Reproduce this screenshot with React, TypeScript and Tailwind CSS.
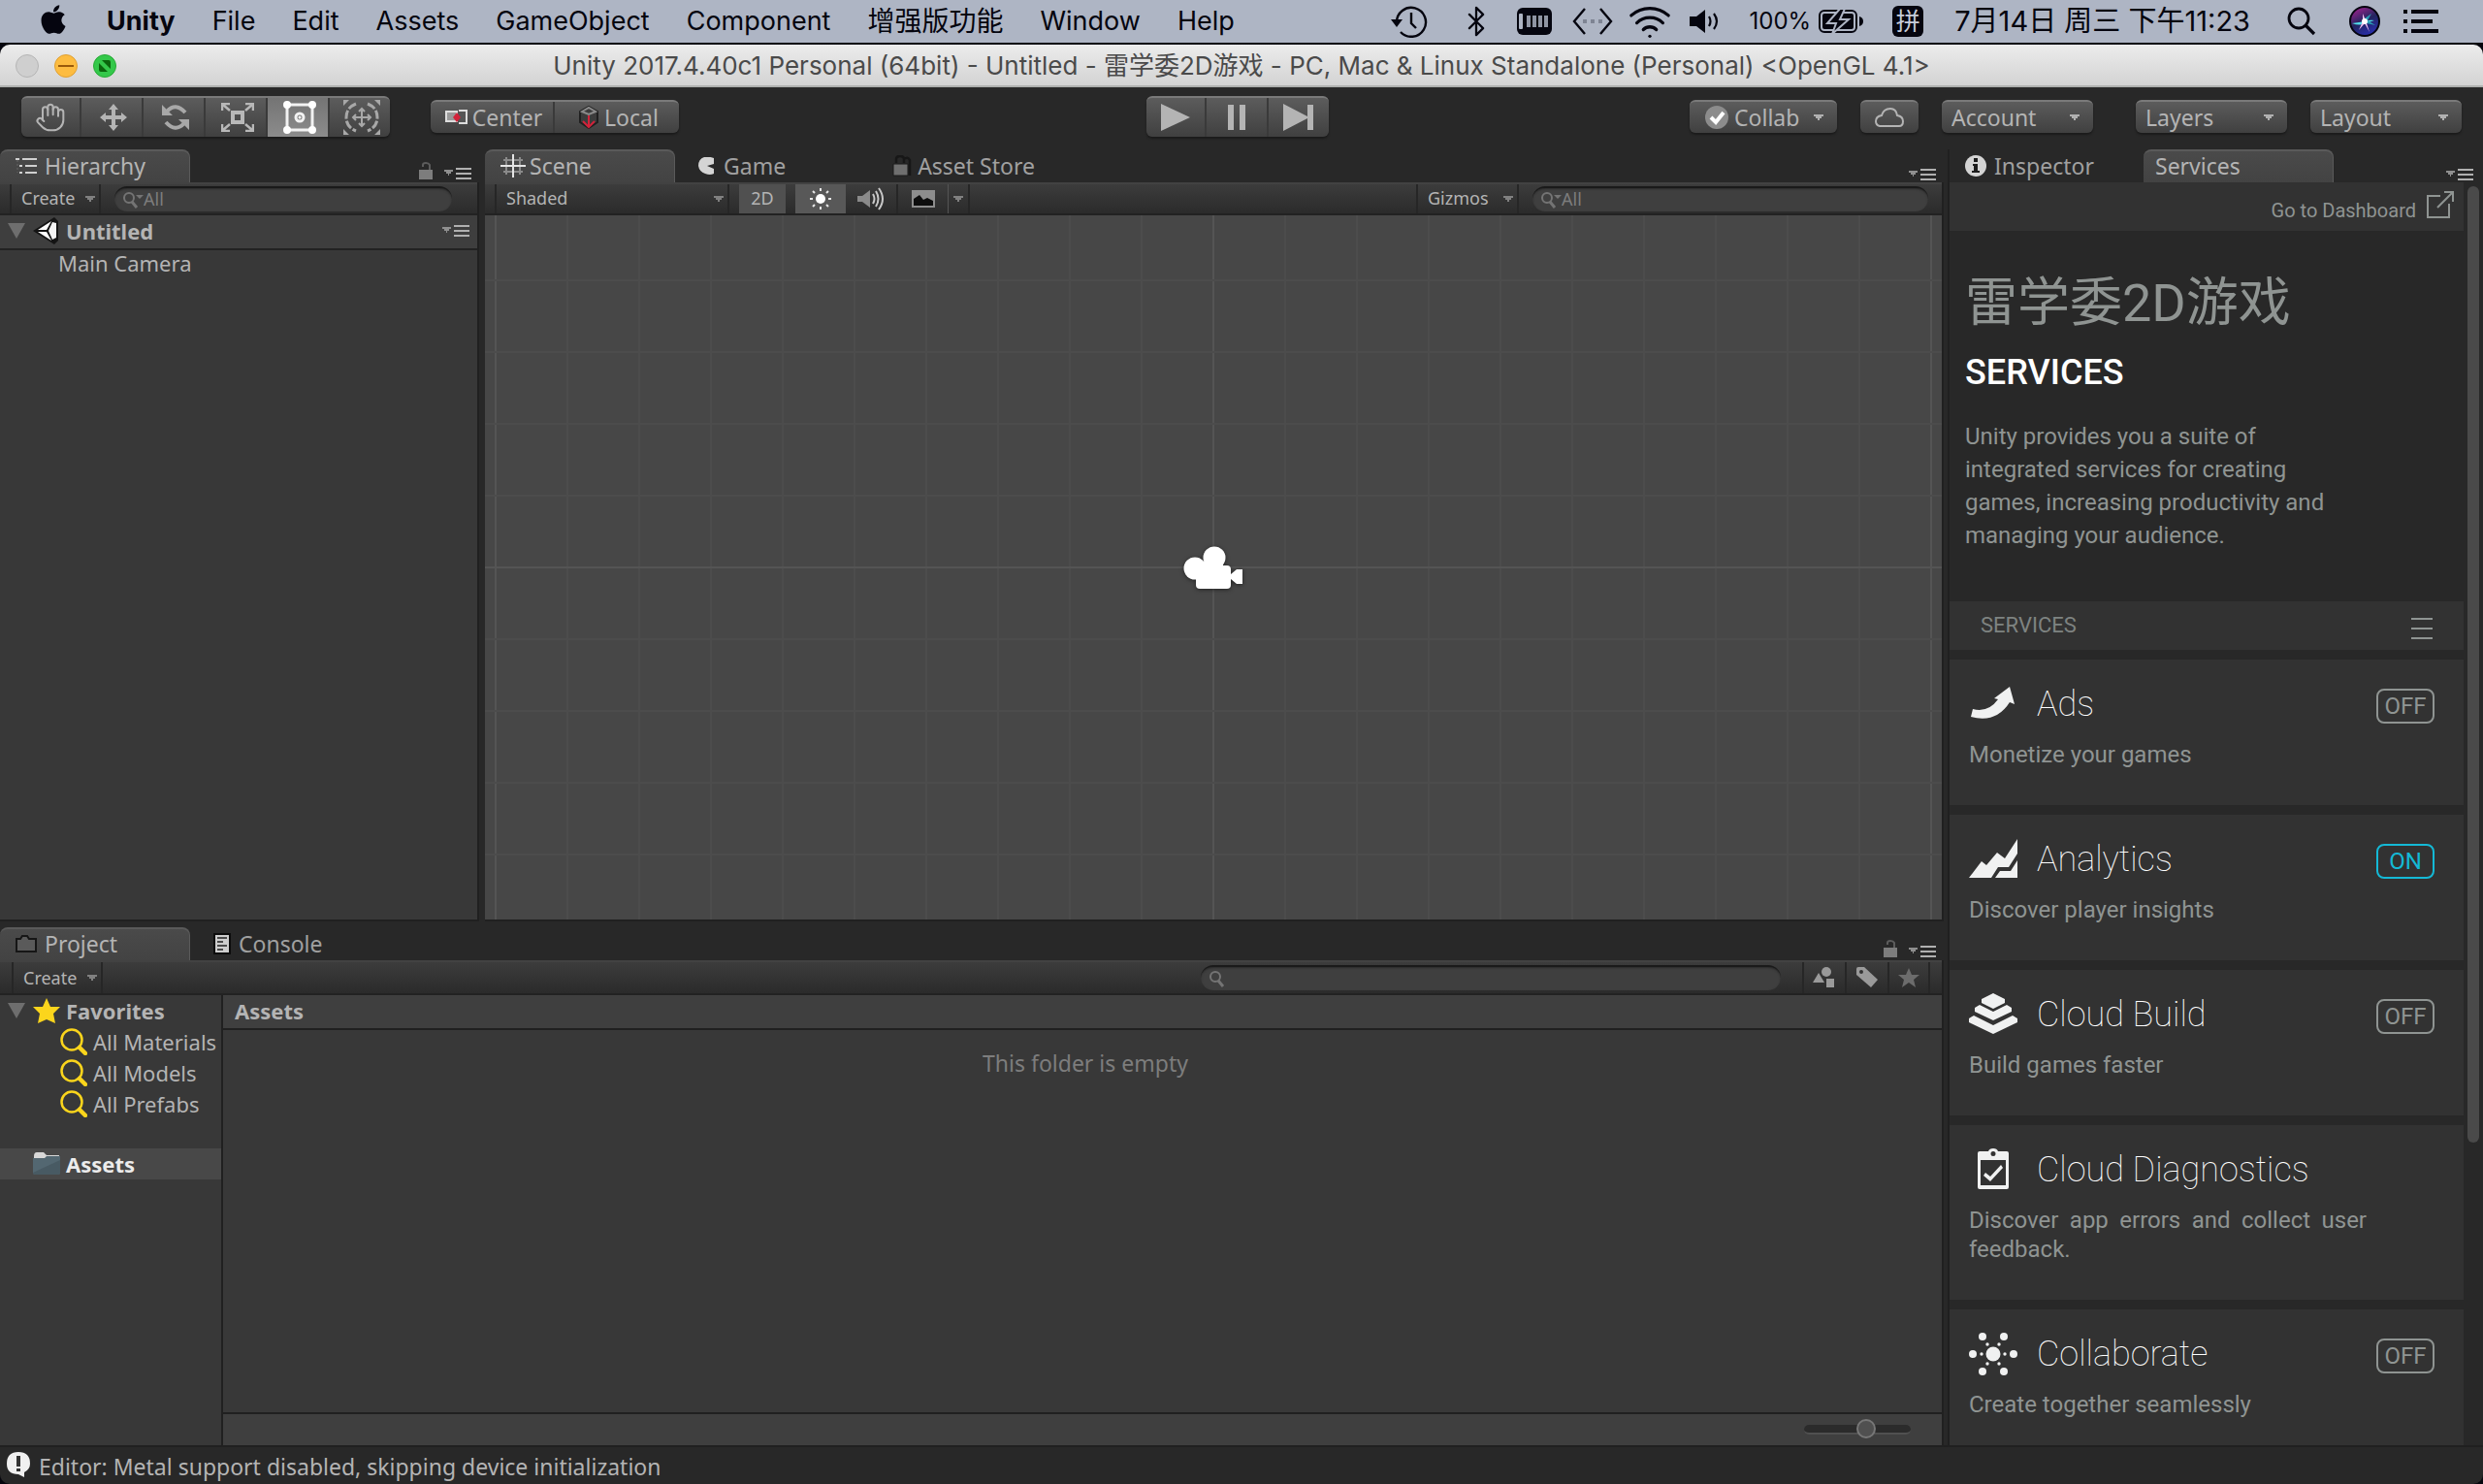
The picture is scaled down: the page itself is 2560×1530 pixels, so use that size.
import React from 'react';
import { Bluetooth, Hand, Wifi } from 'lucide-react';
import { FaApple } from 'react-icons/fa';

const menuItems = ['File', 'Edit', 'Assets', 'GameObject', 'Component', '增强版功能', 'Window', 'Help'];

/* ---------- small shared pieces ---------- */

const Arrow: React.FC<{ className?: string }> = ({ className = '' }) => (
  <svg viewBox="0 0 10 8" className={`h-2 w-2.5 shrink-0 ${className}`} fill="currentColor" aria-hidden="true">
    <path d="M0 1h10v2H8v2H6v2H4V5H2V3H0z" />
  </svg>
);

const PanelMenu: React.FC = () => (
  <button type="button" aria-label="Panel menu" className="block">
    <svg viewBox="0 0 28 12" className="h-3 w-7">
      <path d="M0 2h9v2H7v2H5v2H4V6H2V4H0z" fill="#8f8f8f" />
      <path d="M12 1h16M12 6h16M12 11h16" stroke="#b0b0b0" strokeWidth="2" />
    </svg>
  </button>
);

const Lock: React.FC = () => (
  <button type="button" aria-label="Lock panel" className="block">
    <svg viewBox="0 0 14 18" className="h-[18px] w-3.5">
      <path d="M4 5V3q0-2 3-2t4 2v5" fill="none" stroke="#5c5c5c" strokeWidth="2" />
      <path d="M0 8h14v10H0z" fill="#7d7d7d" />
    </svg>
  </button>
);

interface DropdownProps {
  label: string;
  name?: string;
  selectClass?: string;
  arrowClass?: string;
}

const Dropdown: React.FC<DropdownProps> = ({ label, name, selectClass = '', arrowClass = 'right-3.5 text-[#b0b0b0]' }) => (
  <div className="relative flex h-full items-center">
    <select aria-label={name ?? label} className={`h-full w-full appearance-none bg-transparent outline-none ${selectClass}`}>
      <option>{label}</option>
    </select>
    <Arrow className={`pointer-events-none absolute ${arrowClass}`} />
  </div>
);

const SearchField: React.FC<{ name: string; placeholder?: string; className?: string }> = ({
  name,
  placeholder,
  className = '',
}) => (
  <label
    className={`flex h-[26px] items-center rounded-full border-t-2 border-[#1a1a1a] bg-[#3f3f3f] pl-2 shadow-[inset_0_1px_2px_#2a2a2a] ${className}`}
  >
    <svg viewBox="0 0 22 18" className="h-[18px] w-[22px] shrink-0" fill="none" stroke="#747474" strokeWidth="2">
      <circle cx="7" cy="7" r="5" />
      <path d="M10 11l5 6" strokeWidth="3" />
      {placeholder && <path d="M14 4h8l-4 4z" fill="#747474" stroke="none" />}
    </svg>
    <input
      type="text"
      aria-label={name}
      placeholder={placeholder}
      className="w-full min-w-0 bg-transparent pr-3 pb-0.5 text-[18px] leading-6 text-[#b4b4b4] outline-none placeholder:text-[#7d7d7d]"
    />
  </label>
);

const ActiveTab: React.FC<{ children: React.ReactNode; className?: string }> = ({ children, className = 'pl-4' }) => (
  <button
    type="button"
    className={`flex h-[34px] w-[196px] items-center rounded-t-lg border-t-2 border-r border-[#5a5a5a] bg-gradient-to-b from-[#4a4a4a] to-[#434343] pb-0.5 text-[23px] leading-8 text-[#b4b4b4] ${className}`}
  >
    {children}
  </button>
);

const Tab: React.FC<{ children: React.ReactNode; className?: string }> = ({ children, className = '' }) => (
  <button type="button" className={`flex h-[34px] items-center text-[23px] leading-8 text-[#a0a0a0] ${className}`}>
    {children}
  </button>
);

const toolbarRow =
  'flex shrink-0 items-center border-t-2 border-b-2 border-t-[#424242] border-b-[#222] bg-gradient-to-b from-[#3c3c3c] to-[#2b2b2b] text-[18px] leading-6 text-[#b4b4b4]';

const smallArrow = 'right-1 text-[#808080]';

const buttonSkin =
  'border-t-2 border-[#7a7a7a] bg-gradient-to-b from-[#5c5c5c] to-[#404040] shadow-[0_2px_2px_#1b1b1b]';

/* ---------- macOS menu bar ---------- */

const MenuBar: React.FC = () => (
  <header className="flex h-[46px] shrink-0 items-center border-b-2 border-[#05050d] bg-[#aeb5c4] pr-[46px] pl-[38px] font-['Inter','Noto_Sans_CJK_SC',sans-serif] text-[27px] leading-8 whitespace-nowrap text-[#05050f]">
    <nav className="flex items-center gap-[38px]">
      <button type="button" aria-label="Apple menu" className="-mt-1">
        <FaApple size={34} />
      </button>
      <button type="button" className="font-bold">
        Unity
      </button>
      {menuItems.map((item) => (
        <button type="button" key={item} className={item === '增强版功能' ? 'text-[28px]' : ''}>
          {item}
        </button>
      ))}
    </nav>
    <div className="ml-auto flex items-center">
      <svg viewBox="0 0 38 34" className="h-[34px] w-[38px]" fill="none" stroke="#05050f" strokeWidth="2.4">
        <path d="M6 18A15 15 0 1 1 10 28" />
        <path d="M21 8v11l5 5" />
        <path d="M0 15h12l-6 8z" fill="#05050f" stroke="none" />
      </svg>
      <Bluetooth className="ml-[33px] h-[34px] w-[34px]" strokeWidth={1.6} />
      <svg viewBox="0 0 36 28" className="ml-[25px] h-7 w-9">
        <rect width="36" height="28" rx="6" fill="#05050f" />
        <rect x="2" y="6" width="4" height="16" rx="1" fill="#aeb5c4" />
        <path d="M12 8v12M18 8v12M24 8v12M30 8v12" stroke="#8f95a3" strokeWidth="4" />
      </svg>
      <svg viewBox="0 0 42 28" className="ml-[21px] h-7 w-[42px]" fill="none" stroke="#05050f" strokeWidth="2.4">
        <path d="M13 1L2 14l11 13M29 1l11 13-11 13" />
        <path d="M11 14h4M19 14h4M27 14h4" stroke="#7e8493" strokeWidth="4" />
      </svg>
      <Wifi className="ml-[15px] h-[46px] w-[46px]" strokeWidth={1.7} />
      <svg viewBox="0 0 34 26" className="ml-[18px] h-[26px] w-[34px]" fill="none" stroke="#05050f" strokeWidth="2.2">
        <path d="M0 8h7l9-7v24l-9-7H0z" fill="#05050f" stroke="none" />
        <path d="M20 8q3 5 0 10M25 5q6 8 0 16" />
      </svg>
      <span className="ml-7 text-[24px]">100%</span>
      <svg viewBox="0 0 46 26" className="ml-2 h-[26px] w-[46px]">
        <rect x="1" y="2" width="38" height="22" rx="5" fill="none" stroke="#05050f" strokeWidth="2" />
        <rect x="4" y="5" width="32" height="16" rx="2" fill="#05050f" />
        <path d="M42 8q4 1 4 5t-4 5z" fill="#05050f" />
        <path d="M22 0L9 15h9l-4 11 17-15h-9l5-11z" fill="#05050f" stroke="#aeb5c4" strokeWidth="2" />
      </svg>
      <span className="ml-[30px] flex h-8 w-8 items-center justify-center rounded-md bg-[#05050f] text-[25px] text-[#c7cddb]">
        拼
      </span>
      <span className="ml-[32px] text-[29px]">7月14日 周三 下午11:23</span>
      <svg viewBox="0 0 30 30" className="ml-[38px] h-[30px] w-[30px]" fill="none" stroke="#05050f" strokeWidth="2.8">
        <circle cx="12" cy="12" r="10" />
        <path d="M19 19l9 9" strokeWidth="3.2" />
      </svg>
      <svg viewBox="0 0 32 32" className="ml-[34px] h-8 w-8">
        <defs>
          <linearGradient id="siri" x1="0.2" y1="0" x2="0.7" y2="1">
            <stop offset="0" stopColor="#a3238f" />
            <stop offset="0.5" stopColor="#22255f" />
            <stop offset="1" stopColor="#2a2fb4" />
          </linearGradient>
        </defs>
        <circle cx="16" cy="16" r="15" fill="url(#siri)" stroke="#05050f" strokeWidth="2" />
        <path d="M3 18q8-1 13-2 6-2 10-1-6 2-9 3-6 3-14 0z" fill="#52dbe8" />
        <path d="M14 8l3 7 4 12-5-9-6 7 4-9z" fill="#f0bff0" />
        <path d="M16 13l7-5-4 7 8 5-9-2z" fill="#2a9db6" />
        <circle cx="16" cy="16" r="3" fill="#fff" />
      </svg>
      <svg viewBox="0 0 36 24" className="ml-6 h-6 w-9" stroke="#05050f" strokeWidth="4">
        <path d="M0 2h4M8 2h28M0 12h4M8 12h22M0 22h4M8 22h28" />
      </svg>
    </div>
  </header>
);

const TitleBar: React.FC = () => (
  <div className="flex h-11 shrink-0 items-center rounded-t-[10px] border-b-2 border-[#aeb0ae] bg-gradient-to-b from-[#ececec] to-[#d3d3d3] px-4 pt-0.5 font-['Inter','Noto_Sans_CJK_SC',sans-serif]">
    <div className="flex flex-1 gap-4">
      <button type="button" aria-label="Close" className="h-6 w-6 rounded-full border border-[#b5b5b5] bg-[#cfcfcf]" />
      <button type="button" aria-label="Minimize" className="flex h-6 w-6 items-center justify-center rounded-full border border-[#dfa032] bg-[#fdbc40]">
        <span className="h-0.5 w-4 bg-[#9a5a0a]" />
      </button>
      <button type="button" aria-label="Zoom" className="flex h-6 w-6 items-center justify-center rounded-full border border-[#27aa35] bg-[#34c84a]">
        <svg viewBox="0 0 12 12" className="h-3 w-3" fill="#0b650d">
          <path d="M3 0h7q2 0 2 2v7zM0 3l9 9H2q-2 0-2-2z" />
        </svg>
      </button>
    </div>
    <h1 className="text-[26px] leading-8 whitespace-nowrap text-[#4a4a4a]">
      Unity 2017.4.40c1 Personal (64bit) - Untitled - 雷学委2D游戏 - PC, Mac &amp; Linux Standalone (Personal) &lt;OpenGL 4.1&gt;
    </h1>
    <div className="flex-1" />
  </div>
);

/* ---------- editor toolbar ---------- */

const tools = [
  { name: 'Hand', icon: <Hand className="h-8 w-8" color="#b4b4b4" strokeWidth={1.5} /> },
  {
    name: 'Move',
    icon: (
      <svg viewBox="0 0 28 28" className="h-7 w-7" fill="#b4b4b4">
        <path d="M14 0l5 6h-3v6h6V9l6 5-6 5v-3h-6v6h3l-5 6-5-6h3v-6H6v3l-6-5 6-5v3h6V6H9z" />
      </svg>
    ),
  },
  {
    name: 'Rotate',
    icon: (
      <svg viewBox="0 0 30 28" className="h-7 w-[30px]" fill="none" stroke="#a8a8a8" strokeWidth="4">
        <path d="M6 8q9-10 19 1M24 20q-9 10-19-1" />
        <path d="M1 1v11h11zM29 27V16H18z" fill="#a8a8a8" stroke="none" />
      </svg>
    ),
  },
  {
    name: 'Scale',
    icon: (
      <svg viewBox="0 0 34 30" className="h-[30px] w-[34px]" fill="none" stroke="#b8b8b8" strokeWidth="2.5">
        <rect x="12" y="10" width="10" height="10" strokeWidth="4" />
        <path d="M1 8V1h8M25 1h8v7M33 22v7h-8M9 29H1v-7M2 2l7 6M32 2l-7 6M32 28l-7-6M2 28l7-6" />
      </svg>
    ),
  },
  {
    name: 'Rect',
    icon: (
      <svg viewBox="0 0 34 34" className="h-[34px] w-[34px]" fill="none" stroke="#f2f2f2" strokeWidth="3">
        <rect x="4" y="4" width="26" height="26" />
        <circle cx="17" cy="17" r="4" />
        <path d="M0 4q0-4 4-4t4 4-4 4-4-4zM26 4q0-4 4-4t4 4-4 4-4-4zM0 30q0-4 4-4t4 4-4 4-4-4zM26 30q0-4 4-4t4 4-4 4-4-4z" fill="#fff" stroke="none" />
        <circle cx="17" cy="17" r="1.5" fill="#fff" stroke="none" />
      </svg>
    ),
  },
  {
    name: 'Transform',
    icon: (
      <svg viewBox="0 0 38 36" className="h-9 w-[38px]" fill="none" stroke="#a8a8a8" strokeWidth="2">
        <path d="M13 4Q3 8 3 18t10 14M25 4q10 4 10 14T25 32" strokeWidth="3" strokeDasharray="9 2" />
        <path d="M19 10v16M11 18h16M16 12l3-3 3 3M16 24l3 3 3-3M13 15l-3 3 3 3M25 15l3 3-3 3" />
        <path d="M0 0h6L0 6zM38 0h-6l6 6zM0 36h6l-6-6zM38 36h-6l6-6z" fill="#a8a8a8" stroke="none" />
      </svg>
    ),
  },
];

const Toolbar: React.FC = () => (
  <div className="flex h-16 shrink-0 items-center pr-2 pb-1 text-[23px] leading-8 text-[#b4b4b4]">
    <div className="flex flex-1 items-center">
      <div className={`ml-[22px] flex h-[42px] overflow-hidden rounded-md ${buttonSkin}`}>
        {tools.map((tool) => (
          <button
            type="button"
            key={tool.name}
            aria-label={tool.name}
            className={`flex w-16 items-center justify-center border-r-2 border-[#3a3a3a] pl-1 first:w-[62px] first:pl-0 last:w-[62px] last:border-r-0 ${
              tool.name === 'Rect' ? 'bg-gradient-to-b from-[#747474] to-[#8c8c8c]' : ''
            }`}
          >
            {tool.icon}
          </button>
        ))}
      </div>
      <div className={`ml-[42px] flex h-[34px] overflow-hidden rounded-md ${buttonSkin}`}>
        <button type="button" className="flex w-32 items-center justify-center gap-1 border-r-2 border-[#3a3a3a] pl-1">
          <svg viewBox="0 0 24 16" className="h-4 w-6">
            <path d="M1 2h11v10H1z" fill="#999" stroke="#ddd" strokeWidth="2" />
            <path d="M14 1h8v13h-8" fill="#555" stroke="#ddd" strokeWidth="2" />
            <path d="M12 3l4 5-4 5-4-5z" fill="#d3223a" />
          </svg>
          Center
        </button>
        <button type="button" className="flex w-32 items-center justify-center gap-1.5 pl-1">
          <svg viewBox="0 0 20 24" className="h-6 w-5" fill="none" strokeWidth="2">
            <path d="M1 17V6l9-5 9 5v11l-9 6z" stroke="#202020" fill="#3c3c3c" />
            <path d="M3 6l7-4 7 4-7 3z" stroke="#8a8a8a" />
            <path d="M10 10v11M4 16l6 6 6-6" stroke="#d3223a" />
          </svg>
          Local
        </button>
      </div>
    </div>
    <div className={`flex h-[42px] overflow-hidden rounded-md ${buttonSkin}`}>
      <button type="button" aria-label="Play" className="flex w-[62px] items-center justify-center border-r-2 border-[#3a3a3a]">
        <svg viewBox="0 0 30 28" className="h-7 w-[30px]" fill="#b4b4b4">
          <path d="M0 0l30 14L0 28z" />
        </svg>
      </button>
      <button type="button" aria-label="Pause" className="flex w-16 items-center justify-center border-r-2 border-[#3a3a3a]">
        <svg viewBox="0 0 18 26" className="h-[26px] w-[18px]" fill="#b4b4b4">
          <path d="M0 0h6v26H0zM12 0h6v26h-6z" />
        </svg>
      </button>
      <button type="button" aria-label="Step" className="flex w-[62px] items-center justify-center">
        <svg viewBox="0 0 32 28" className="h-7 w-8" fill="#b4b4b4">
          <path d="M0 0l25 13V1h6v26h-6V15L0 28z" />
        </svg>
      </button>
    </div>
    <div className="flex flex-1 items-center justify-end">
      <div className={`relative h-[34px] w-[152px] rounded-md ${buttonSkin}`}>
        <svg viewBox="0 0 24 24" className="pointer-events-none absolute top-1 left-4 h-6 w-6">
          <circle cx="12" cy="12" r="12" fill="#8c8c8c" />
          <path d="M6 12l5 5 8-10" fill="none" stroke="#fff" strokeWidth="4" />
        </svg>
        <Dropdown label="Collab" selectClass="pl-[46px]" />
      </div>
      <button type="button" aria-label="Cloud services" className={`ml-6 flex h-[34px] w-[60px] items-center justify-center rounded-md ${buttonSkin}`}>
        <svg viewBox="0 0 30 20" className="h-5 w-[30px]" fill="none" stroke="#b4b4b4" strokeWidth="2">
          <path d="M5 19q-4-1-4-5 0-5 6-6 2-7 9-7 6 0 7 7 6 1 6 6t-4 5z" />
        </svg>
      </button>
      <div className={`ml-6 h-[34px] w-[156px] rounded-md ${buttonSkin}`}>
        <Dropdown label="Account" selectClass="pl-2.5" />
      </div>
      <div className={`ml-11 h-[34px] w-[156px] rounded-md ${buttonSkin}`}>
        <Dropdown label="Layers" selectClass="pl-2.5" />
      </div>
      <div className={`mr-3.5 ml-6 h-[34px] w-[156px] rounded-md ${buttonSkin}`}>
        <Dropdown label="Layout" selectClass="pl-2.5" />
      </div>
    </div>
  </div>
);

/* ---------- panels ---------- */

const Hierarchy: React.FC = () => (
  <section className="flex w-[494px] shrink-0 flex-col">
    <div className="flex h-[34px] items-center justify-between pr-2">
      <ActiveTab>
        <svg viewBox="0 0 22 18" className="mr-2 h-[18px] w-[22px]" fill="none" stroke="#d0d0d0" strokeWidth="2">
          <path d="M0 2h4M7 2h15M4 9h3M10 9h12M4 16h3M10 16h12" />
          <path d="M2 3v13" stroke="#666" strokeWidth="1" strokeDasharray="2 2" />
        </svg>
        Hierarchy
      </ActiveTab>
      <div className="mt-2.5 flex items-end gap-3">
        <Lock />
        <PanelMenu />
      </div>
    </div>
    <div className="flex flex-1 flex-col border-r-2 border-b-2 border-[#202020] bg-[#383838]">
      <div className={`${toolbarRow} h-[34px]`}>
        <div className="ml-2.5 h-full w-[94px] border-x-2 border-[#262626]">
          <Dropdown label="Create" name="Create object" selectClass="pb-0.5 pl-2.5" arrowClass={smallArrow} />
        </div>
        <SearchField name="Search hierarchy" placeholder="All" className="ml-3.5 w-[348px]" />
      </div>
      <div className="flex h-9 items-center border-b-2 border-[#222] bg-[#3e3e3e] pr-2 pb-0.5 pl-2 text-[22px] leading-8 font-bold text-[#b4b4b4]">
        <svg viewBox="0 0 18 16" className="h-4 w-[18px]" fill="#6e6e6e">
          <path d="M0 0h18L9 16z" />
        </svg>
        <svg viewBox="0 0 28 28" className="mr-1.5 ml-2 h-7 w-7">
          <path d="M0 14L22 0l4 4v20l-4 4z" fill="#141414" />
          <path d="M5 13L19 4l-5 9zM5 15h9l5 9z" fill="#fff" />
          <path d="M20 5l4 1v15l-4 2-4-9z" fill="#f4f4f4" />
        </svg>
        <span className="flex-1">Untitled</span>
        <PanelMenu />
      </div>
      <ul>
        <li className="h-8 pl-[60px] text-[22px] leading-[26px] text-[#b4b4b4]">Main Camera</li>
      </ul>
    </div>
  </section>
);

const gridStep = 74;
const gridCols = Array.from({ length: 21 }, (_, i) => i - 10);
const gridRows = Array.from({ length: 9 }, (_, i) => i - 4);

const SceneView: React.FC = () => (
  <svg viewBox="-751 -363 1502 726" preserveAspectRatio="xMidYMid slice" className="min-h-0 w-full flex-1 bg-[#474747]">
    <g strokeWidth="2">
      {gridCols.map((c) => (
        <line key={c} x1={c * gridStep} x2={c * gridStep} y1="-363" y2="363" stroke={c % 10 === 0 ? '#545454' : '#4c4c4c'} />
      ))}
      {gridRows.map((r) => (
        <line key={r} x1="-751" x2="751" y1={r * gridStep} y2={r * gridStep} stroke={r === 0 ? '#545454' : '#4c4c4c'} />
      ))}
    </g>
    <g fill="#fff" className="drop-shadow-[0_1px_2px_#222]">
      <circle cx="-19" cy="1" r="11.5" />
      <circle cx="1" cy="-10" r="11.5" />
      <rect x="-18" y="-2" width="36" height="24" rx="4" />
      <path d="M-22 0l20-10 12 6v6z" />
      <path d="M18 7l6-5h6v15h-6l-6-5z" />
    </g>
  </svg>
);

const Scene: React.FC = () => (
  <section className="flex min-w-0 flex-1 flex-col">
    <div className="flex h-[34px] items-center">
      <ActiveTab>
        <svg viewBox="0 0 26 24" className="mr-1 h-6 w-[26px]" fill="none">
          <path d="M6 3v18M20 3v18M3 6h20M3 18h20" stroke="#8a8a8a" strokeWidth="2" />
          <path d="M13 0v24M0 12h26" stroke="#e4e4e4" strokeWidth="2" />
        </svg>
        Scene
      </ActiveTab>
      <Tab className="ml-6 gap-2">
        <svg viewBox="0 0 18 18" className="h-[18px] w-[18px]" fill="#d4d4d4">
          <path d="M16 1v6L9 9l7 3v5q-4 2-9 0-6-2-7-8 0-7 6-9 5-1 10 1z" />
        </svg>
        Game
      </Tab>
      <Tab className="ml-[110px] gap-1.5">
        <svg viewBox="0 0 20 22" className="h-[22px] w-5">
          <path d="M4 8V4q0-3 4-3t4 3v4M12 4q4-3 6 1v16" fill="none" stroke="#171717" strokeWidth="2.5" />
          <path d="M1 9h15v12H1z" fill="#6f6f6f" stroke="#1a1a1a" />
        </svg>
        Asset Store
      </Tab>
      <div className="mt-[18px] mr-2 ml-auto">
        <PanelMenu />
      </div>
    </div>
    <div className="flex min-h-0 flex-1 flex-col border-r-2 border-b-2 border-[#202020]">
      <div className={`${toolbarRow} h-[34px]`}>
        <div className="ml-2.5 h-full w-[242px] border-x-2 border-[#262626]">
          <Dropdown label="Shaded" name="Draw mode" selectClass="pb-0.5 pl-2.5" arrowClass={smallArrow} />
        </div>
        <button type="button" className="ml-2.5 h-full w-12 bg-[#505050] pb-0.5">
          2D
        </button>
        <button type="button" aria-label="Scene lighting" className="ml-2.5 flex h-full w-[52px] items-center justify-center bg-[#585858]">
          <svg viewBox="0 0 22 22" className="h-[22px] w-[22px]" stroke="#e8e8e8" strokeWidth="2">
            <circle cx="11" cy="11" r="5" fill="#fff" stroke="none" />
            <path d="M11 0v3M11 19v3M0 11h3M19 11h3M3 3l2 2M17 17l2 2M19 3l-2 2M5 17l-2 2" />
          </svg>
        </button>
        <button type="button" aria-label="Scene audio" className="flex h-full w-[54px] items-center justify-center border-r-2 border-[#262626]">
          <svg viewBox="0 0 28 24" className="h-6 w-7" fill="none" stroke="#c8c8c8" strokeWidth="2">
            <path d="M0 9h5l8-6v18l-8-6H0z" fill="#8a8a8a" stroke="none" />
            <path d="M16 7q3 5 0 10M19 4q5 8 0 16M22 1q8 11 0 22" />
          </svg>
        </button>
        <button type="button" aria-label="Scene effects" className="flex h-full w-[52px] items-center justify-center border-r border-[#555]">
          <svg viewBox="0 0 24 18" className="h-[18px] w-6">
            <path d="M0 0h24v18H0z" fill="#8d8d8d" />
            <path d="M2 16v-7l6-4 4 5 4-2 6 3v5z" fill="#0d0d0d" />
          </svg>
        </button>
        <button type="button" aria-label="Effects menu" className="flex h-full w-[22px] items-center justify-center border-r-2 border-[#262626]">
          <Arrow className="text-[#808080]" />
        </button>
        <div className="ml-auto h-full w-[106px] border-x-2 border-[#262626]">
          <Dropdown label="Gizmos" selectClass="pb-0.5 pl-2.5" arrowClass={smallArrow} />
        </div>
        <SearchField name="Search scene" placeholder="All" className="mr-3.5 ml-3.5 w-[408px]" />
      </div>
      <SceneView />
    </div>
  </section>
);

const favorites = ['All Materials', 'All Models', 'All Prefabs'];

const Project: React.FC = () => (
  <section className="flex h-[534px] shrink-0 flex-col">
    <div className="flex h-[34px] items-center">
      <ActiveTab>
        <svg viewBox="0 0 22 18" className="mr-2 h-[18px] w-[22px]">
          <path d="M1 4h4l2-3h5l2 3h7v13H1z" fill="#5a5a5a" stroke="#161616" strokeWidth="2" />
        </svg>
        Project
      </ActiveTab>
      <Tab className="ml-6 gap-2">
        <svg viewBox="0 0 18 22" className="h-[22px] w-[18px]">
          <path d="M1 1h16v20H1z" fill="#cdcdcd" stroke="#0c0c0c" strokeWidth="2" />
          <path d="M4 5h10M4 9h6M4 13h10M4 17h6" stroke="#4a4a4a" strokeWidth="2" />
        </svg>
        Console
      </Tab>
      <div className="mt-2.5 mr-2 ml-auto flex items-end gap-3">
        <Lock />
        <PanelMenu />
      </div>
    </div>
    <div className="flex flex-1 flex-col border-r-2 border-[#202020]">
      <div className={`${toolbarRow} h-9`}>
        <div className="ml-3 h-full w-[94px] border-x-2 border-[#262626]">
          <Dropdown label="Create" name="Create asset" selectClass="pl-2.5" arrowClass={smallArrow} />
        </div>
        <SearchField name="Search project" className="mr-[22px] ml-auto w-[598px]" />
        <button type="button" aria-label="Search by type" className="flex h-full w-11 items-center justify-center border-l-2 border-[#262626]">
          <svg viewBox="0 0 24 22" className="h-[22px] w-6" fill="#9a9a9a">
            <circle cx="14" cy="5" r="5" />
            <path d="M0 16L6 6l6 10zM14 12h8v9h-8z" />
          </svg>
        </button>
        <button type="button" aria-label="Search by label" className="flex h-full w-11 items-center justify-center border-l-2 border-[#262626]">
          <svg viewBox="0 0 24 22" className="h-[22px] w-6">
            <path d="M1 2q0-2 2-2h6l14 13-7 8L1 8z" fill="#9a9a9a" />
            <circle cx="6" cy="5" r="2" fill="#333" />
          </svg>
        </button>
        <button type="button" aria-label="Save search" className="mr-3 flex h-full w-11 items-center justify-center border-x-2 border-[#262626]">
          <svg viewBox="0 0 22 20" className="h-5 w-[22px]" fill="#6c6c6c">
            <path d="M11 0l3 7h8l-6 5 2 8-7-5-7 5 2-8-6-5h8z" />
          </svg>
        </button>
      </div>
      <div className="flex flex-1 text-[22px] leading-8 text-[#b4b4b4]">
        <div className="w-[230px] shrink-0 border-r-2 border-[#202020] bg-[#383838]">
          <div className="flex h-8 items-center pl-2 font-bold">
            <svg viewBox="0 0 18 16" className="h-4 w-[18px]" fill="#6e6e6e">
              <path d="M0 0h18L9 16z" />
            </svg>
            <svg viewBox="0 0 28 26" className="mr-1.5 ml-2 h-[26px] w-7" fill="#fbd51c">
              <path d="M14 0l4 9h10l-7 7 2 10-9-4-9 4 2-10-7-7h10z" />
            </svg>
            Favorites
          </div>
          <ul>
            {favorites.map((name) => (
              <li key={name} className="flex h-8 items-center pl-[62px] whitespace-nowrap">
                <svg viewBox="0 0 28 28" className="mr-1.5 h-7 w-7 shrink-0" fill="none" stroke="#fbd51c" strokeLinecap="round">
                  <circle cx="12" cy="12" r="10.5" strokeWidth="2.5" />
                  <path d="M20 20l6 6" strokeWidth="4.5" />
                </svg>
                {name}
              </li>
            ))}
          </ul>
          <div className="mt-[30px] flex h-8 items-center bg-[#484848] pl-[34px] font-bold text-[#ececec]">
            <svg viewBox="0 0 28 24" className="mr-1.5 h-6 w-7">
              <path d="M1 4q0-4 3-4h7l3 3h13v6H1z" fill="#d8d8d8" />
              <path d="M0 6h12l2-2h14v17q0 2-2 2H2q-2 0-2-2z" fill="#536771" />
              <path d="M0 21L28 8v13q0 2-2 2H2q-2 0-2-2z" fill="#485a63" />
            </svg>
            Assets
          </div>
        </div>
        <div className="flex min-w-0 flex-1 flex-col bg-[#383838]">
          <div className="h-9 border-b-2 border-[#202020] bg-[#3f3f3f] pl-3 font-bold">Assets</div>
          <p className="flex-1 pt-[18px] pl-1.5 text-center text-[23px] text-[#7d7d7d]">This folder is empty</p>
          <div className="flex h-[34px] items-center justify-end border-t-2 border-[#202020] bg-[#3f3f3f] pr-8">
            <input
              type="range"
              aria-label="Icon size"
              defaultValue={60}
              className="h-2.5 w-[110px] appearance-none rounded-full border-b-2 border-[#505050] bg-[#2b2b2b] [&::-webkit-slider-thumb]:h-5 [&::-webkit-slider-thumb]:w-5 [&::-webkit-slider-thumb]:appearance-none [&::-webkit-slider-thumb]:rounded-full [&::-webkit-slider-thumb]:border-2 [&::-webkit-slider-thumb]:border-[#777] [&::-webkit-slider-thumb]:bg-[#505050]"
            />
          </div>
        </div>
      </div>
    </div>
  </section>
);

/* ---------- services ---------- */

interface Service {
  name: string;
  description: string;
  state?: 'ON' | 'OFF';
  icon: React.ReactNode;
}

const services: Service[] = [
  {
    name: 'Ads',
    description: 'Monetize your games',
    state: 'OFF',
    icon: <path d="M4 27q16 4 26-10l-4-1L42 4l5 18-5-2Q28 42 2 35z" />,
  },
  {
    name: 'Analytics',
    description: 'Discover player insights',
    state: 'ON',
    icon: <path d="M0 41l13-17 5 4 11-13 8 6L50 1v15L41 30H30L23 41zM27 41l5-7h11l7-11v18z" />,
  },
  {
    name: 'Cloud Build',
    description: 'Build games faster',
    state: 'OFF',
    icon: (
      <path d="M25 0l12 6v4l-12 6-12-6V6zM11 12l14 7 14-7 5 3v4l-19 9-19-9v-4zM5 23l20 10 20-10 5 3v4L25 42 0 30v-4z" />
    ),
  },
  {
    name: 'Cloud Diagnostics',
    description: 'Discover app errors and collect user feedback.',
    icon: (
      <path
        fillRule="evenodd"
        d="M11 3h9q1-3 5-3t5 3h9q2 0 2 2v35q0 2-2 2H11q-2 0-2-2V5q0-2 2-2zM12 12v26h26V12zM25 3a2.5 2.5 0 1 0 0 5 2.5 2.5 0 1 0 0-5zM17 25l5 4 11-12 2 3-13 14-7-6z"
      />
    ),
  },
  {
    name: 'Collaborate',
    description: 'Create together seamlessly',
    state: 'OFF',
    icon: (
      <>
        <circle cx="25" cy="22" r="7.5" />
        <circle cx="4" cy="22" r="4" />
        <circle cx="46" cy="22" r="4" />
        <circle cx="14" cy="4" r="4" />
        <circle cx="36" cy="4" r="4" />
        <circle cx="14" cy="40" r="4" />
        <circle cx="36" cy="40" r="4" />
        <circle cx="13" cy="22" r="1.7" />
        <circle cx="37" cy="22" r="1.7" />
        <circle cx="19" cy="12" r="1.7" />
        <circle cx="31" cy="12" r="1.7" />
        <circle cx="19" cy="32" r="1.7" />
        <circle cx="31" cy="32" r="1.7" />
      </>
    ),
  },
];

const ServiceCard: React.FC<{ service: Service }> = ({ service }) => (
  <article className="shrink-0 bg-[#323232] px-5 pt-[23px] pb-[37px]">
    <div className="flex h-[46px] items-center">
      <svg viewBox="0 0 50 44" className="h-11 w-[50px] shrink-0" fill="#f0f1f1">
        {service.icon}
      </svg>
      <h3 className="flex-1 pl-5 text-[36px] leading-[46px] font-thin text-white">{service.name}</h3>
      {service.state && (
        <button
          type="button"
          className={`mt-1 mr-2.5 h-9 w-[60px] rounded-lg border-2 text-center text-[24px] leading-8 ${
            service.state === 'ON' ? 'border-[#14b9d6] text-[#14b9d6]' : 'border-[#8f9492] text-[#8f9492]'
          }`}
        >
          {service.state}
        </button>
      )}
    </div>
    <p className="mt-[14px] w-[410px] text-justify text-[24px] leading-[30px] text-[#8f9492]">{service.description}</p>
  </article>
);

const Services: React.FC = () => (
  <aside className="ml-1 flex w-[552px] shrink-0 flex-col border-l-2 border-[#202020]">
    <div className="flex h-[34px] shrink-0 items-center pl-4">
      <Tab className="w-[184px] gap-2">
        <svg viewBox="0 0 22 22" className="h-[22px] w-[22px]">
          <circle cx="11" cy="11" r="11" fill="#d4d4d4" />
          <path d="M9 3h4v4H9zM8 9h5v7h2v2H7v-2h2v-5H8z" fill="#1c1c1c" />
        </svg>
        Inspector
      </Tab>
      <ActiveTab className="pl-3">Services</ActiveTab>
      <div className="mt-[18px] mr-2.5 ml-auto">
        <PanelMenu />
      </div>
    </div>
    <div className="flex min-h-0 flex-1 font-['Roboto','Noto_Sans_CJK_SC',sans-serif]">
      <div className="flex w-[530px] flex-col overflow-hidden">
        <div className="flex h-[50px] shrink-0 items-center justify-end bg-[#323232] pr-2.5 text-[20px] leading-7 text-[#8f9492]">
          <a href="#dashboard" className="mt-2">
            Go to Dashboard
          </a>
          <svg viewBox="0 0 28 28" className="mb-1 ml-[11px] h-7 w-7" fill="none" stroke="#8f9492" strokeWidth="2">
            <path d="M14 5H1v22h22V13M11 17L27 1M18 1h9v10" />
          </svg>
        </div>
        <div className="h-[382px] shrink-0 pt-[41px] pl-4">
          <h2 className="text-[54px] leading-[68px] text-[#8f9492]">雷学委2D游戏</h2>
          <h3 className="mt-[17px] text-[36px] leading-10 font-medium text-white">SERVICES</h3>
          <p className="mt-[29px] w-[410px] text-[24px] leading-[34px] text-[#8f9492]">
            Unity provides you a suite of integrated services for creating games, increasing productivity and managing your
            audience.
          </p>
        </div>
        <div className="flex h-[50px] shrink-0 items-center justify-between bg-[#323232] pr-8 pl-8 text-[22px] leading-7 text-[#7e8381]">
          <span>SERVICES</span>
          <button type="button" aria-label="Services menu" className="mt-1.5">
            <svg viewBox="0 0 22 22" className="h-[22px] w-[22px]" stroke="#8f9492" strokeWidth="2">
              <path d="M0 1h22M0 11h22M0 21h22" />
            </svg>
          </button>
        </div>
        <div className="mt-2.5 flex flex-col gap-2.5">
          {services.map((service) => (
            <ServiceCard key={service.name} service={service} />
          ))}
        </div>
      </div>
      <div className="flex-1 pt-1 pl-1">
        <div className="h-[76%] w-3 rounded-full bg-[#4a4a4a]" />
      </div>
    </div>
  </aside>
);

const StatusBar: React.FC = () => (
  <footer className="flex h-10 shrink-0 items-center border-t-2 border-[#202020] pt-0.5 pl-1.5 text-[23px] leading-8 text-[#b4b4b4]">
    <svg viewBox="0 0 26 26" className="mr-2 mb-1 h-[26px] w-[26px]">
      <path d="M13 0q12 0 12 12 0 6-6 9v5l-6-3Q1 23 1 12 1 0 13 0z" fill="#f0f0f0" />
      <path d="M11 4h4v11h-4zM11 17h4v3h-4z" fill="#333" />
    </svg>
    Editor: Metal support disabled, skipping device initialization
  </footer>
);

const App: React.FC = () => {
  return (
    <div className="flex h-screen flex-col overflow-hidden bg-[#05050d] font-['Noto_Sans','Noto_Sans_CJK_SC',sans-serif]">
      <MenuBar />
      <main className="flex min-h-0 flex-1 flex-col rounded-[10px] bg-[#282828]">
        <TitleBar />
        <Toolbar />
        <div className="flex min-h-0 flex-1">
          <div className="flex min-w-0 flex-1 flex-col gap-1.5">
            <div className="flex min-h-0 flex-1 gap-1.5">
              <Hierarchy />
              <Scene />
            </div>
            <Project />
          </div>
          <Services />
        </div>
        <StatusBar />
      </main>
    </div>
  );
};

export default App;
